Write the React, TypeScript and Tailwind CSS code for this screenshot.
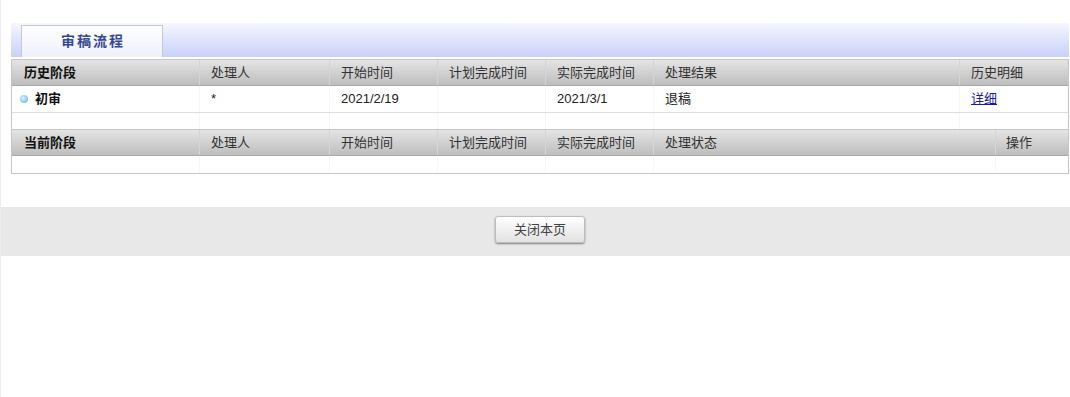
const HISTORY_COLS = "grid grid-cols-[187px_130px_108px_108px_108px_1fr_109px]";
const CURRENT_COLS = "grid grid-cols-[187px_130px_108px_108px_108px_1fr_73px]";

const HISTORY_HEAD = ["处理人", "开始时间", "计划完成时间", "实际完成时间", "处理结果"];
const CURRENT_HEAD = ["处理人", "开始时间", "计划完成时间", "实际完成时间", "处理状态"];

function HeaderRow({ cols, first, cells, last, lastPad }: { cols: string; first: string; cells: string[]; last: string; lastPad: string }) {
  return (
    <div className={`${cols} h-[26px] items-center border-b border-[#a9a9a9] bg-gradient-to-b from-[#e4e4e4] to-[#bebebe] text-[13px] text-[#333]`}>
      <div className="flex h-full items-center pl-3 font-bold text-[#111]">{first}</div>
      {cells.map((c) => (
        <div key={c} className="flex h-full items-center border-l border-[#d4d4d4] pl-[11px]">
          {c}
        </div>
      ))}
      <div className={`flex h-full items-center border-l border-[#d4d4d4] ${lastPad}`}>{last}</div>
    </div>
  );
}

function EmptyRow({ cols, border }: { cols: string; border: string }) {
  return (
    <div className={`${cols} h-[17px] ${border}`}>
      <div />
      {[1, 2, 3, 4, 5, 6].map((i) => (
        <div key={i} className="border-l border-[#f6f6f6]" />
      ))}
    </div>
  );
}

export default function App() {
  return (
    <div
      className="h-[397px] w-full border-l border-[#ececec] bg-white"
      style={{ fontFamily: '"Liberation Sans", "Noto Sans CJK SC", sans-serif' }}
    >
      <div className="pl-[10px] pr-px pt-[23px]">
        <div className="flex h-[34px] items-end bg-gradient-to-b from-[#f5f6fd] to-[#c8d1fa] pl-[10px]">
          <div className="flex h-[32px] w-[142px] items-center justify-center border border-b-0 border-[#c5c8d6] bg-gradient-to-b from-white to-[#eef0fa] pl-[2px] text-[14px] font-bold tracking-[2px] text-[#34489a]">
            审稿流程
          </div>
        </div>

        <div className="mt-[2px] border border-[#c6c6c6]">
          <HeaderRow cols={HISTORY_COLS} first="历史阶段" cells={HISTORY_HEAD} last="历史明细" lastPad="pl-[11px]" />
          <div className={`${HISTORY_COLS} h-[27px] items-center border-b border-[#dedede] text-[13px] text-[#222]`}>
            <div className="flex h-full items-center gap-[7px] pl-[8px] font-bold text-[#111]">
              <span className="h-[8px] w-[8px] rounded-full bg-[radial-gradient(circle_at_40%_40%,#d8f2fb,#5ab4dc)]" />
              初审
            </div>
            <div className="flex h-full items-center border-l border-[#f6f6f6] pl-[11px]">*</div>
            <div className="flex h-full items-center border-l border-[#f6f6f6] pl-[11px]">2021/2/19</div>
            <div className="flex h-full items-center border-l border-[#f6f6f6] pl-[11px]" />
            <div className="flex h-full items-center border-l border-[#f6f6f6] pl-[11px]">2021/3/1</div>
            <div className="flex h-full items-center border-l border-[#f6f6f6] pl-[11px]">退稿</div>
            <div className="flex h-full items-center border-l border-[#f6f6f6] pl-[11px]">
              <a href="#" className="text-[#1c1ca8] underline">
                详细
              </a>
            </div>
          </div>
          <EmptyRow cols={HISTORY_COLS} border="border-b border-[#c6c6c6]" />
          <HeaderRow cols={CURRENT_COLS} first="当前阶段" cells={CURRENT_HEAD} last="操作" lastPad="pl-[10px]" />
          <EmptyRow cols={CURRENT_COLS} border="" />
        </div>
      </div>

      <div className="mt-[33px] flex h-[49px] justify-center bg-[#e8e8e8] pl-[9px] pt-[9px]">
        <button className="h-[27px] w-[90px] rounded-[3px] border border-[#bdbdbd] bg-gradient-to-b from-white to-[#e2e2e2] text-[13px] text-[#444] shadow-[0_1px_2px_rgba(0,0,0,0.45)]">
          关闭本页
        </button>
      </div>
    </div>
  );
}
